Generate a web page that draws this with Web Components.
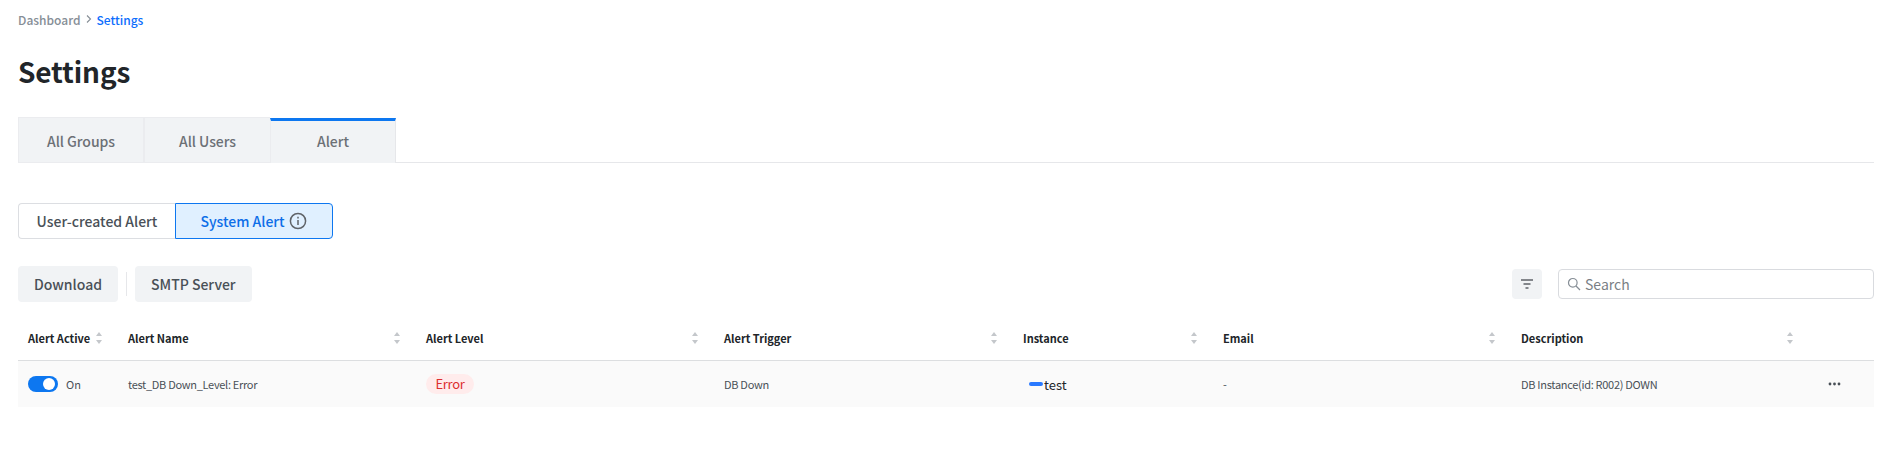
<!DOCTYPE html>
<html>
<head>
<meta charset="utf-8">
<title>Settings</title>
<style>
  html, body { margin: 0; background: #fff; }
  body { font-family: "Noto Sans CJK KR", "Noto Sans", sans-serif; }
</style>
</head>
<body>
<settings-page></settings-page>

<script>
class AppBreadcrumb extends HTMLElement {
  constructor() {
    super();
    this.attachShadow({ mode: 'open' }).innerHTML = `
      <style>
        :host { display: flex; align-items: center; height: 20px; font-size: 12px; font-weight: 500; color: #868e96; }
        svg { margin: 0 4px 0 4px; }
        .current { color: #0d6efd; }
      </style>
      <span>Dashboard</span>
      <svg width="8" height="10" viewBox="0 0 8 10" fill="none" stroke="#868e96" stroke-width="1.1"><path d="M2 1.5 5.5 5 2 8.5"/></svg>
      <span class="current">Settings</span>
    `;
  }
}

class AppTabs extends HTMLElement {
  constructor() {
    super();
    this.attachShadow({ mode: 'open' }).innerHTML = `
      <style>
        :host { display: flex; height: 45px; border-bottom: 1px solid #e6e7ea; }
        .tab {
          box-sizing: border-box; width: 127px; height: 46px; display: flex; align-items: center; justify-content: center;
          background: #f1f3f5; border: 1px solid #ebecef; border-right-width: 0; font-size: 14px; font-weight: 500; color: #6c7075;
          letter-spacing: -0.05px; padding-top: 1px;
        }
        .tab + .tab { border-left-width: 2px; }
        .first { width: 125px; }
        .tab.active { border-top: 3px solid #0d77f0; border-left-width: 1px; border-right: 1px solid #e6e7ea; border-bottom: 0; height: 45px; padding: 0 0 2px; width: 126px; margin-top: 1px; }
      </style>
      <div class="tab first">All Groups</div>
      <div class="tab">All Users</div>
      <div class="tab active">Alert</div>
    `;
  }
}

class AlertSwitch extends HTMLElement {
  constructor() {
    super();
    this.attachShadow({ mode: 'open' }).innerHTML = `
      <style>
        :host { display: inline-flex; height: 36px; font-size: 14px; font-weight: 500; }
        .seg { box-sizing: border-box; display: flex; align-items: center; justify-content: center; height: 36px; }
        .user { width: 157px; border: 1px solid #dcdee2; border-right: 0; border-radius: 4px 0 0 4px; color: #495057; }
        .system { width: 158px; gap: 4px; border: 1px solid #0d77f0; border-radius: 0 4px 4px 0; background: #e0f0ff; color: #0d6ee8; }
        .system svg { margin-right: 1px; }
      </style>
      <div class="seg user">User-created Alert</div>
      <div class="seg system">System Alert
        <svg width="18" height="18" viewBox="0 0 18 18" fill="none" stroke="#5f6368" stroke-width="1.5">
          <circle cx="9" cy="9" r="7.6"/><path d="M9 8v5M9 4.8v1.6"/>
        </svg>
      </div>
    `;
  }
}

class AppButton extends HTMLElement {
  constructor() {
    super();
    this.attachShadow({ mode: 'open' }).innerHTML = `
      <style>
        :host {
          box-sizing: border-box; display: inline-flex; align-items: center; justify-content: center; height: 36px; padding: 0 16px;
          background: #f1f3f5; border-radius: 4px; font-size: 14px; font-weight: 500; color: #495057;
        }
      </style>
      <slot></slot>
    `;
  }
}

class AlertToolbar extends HTMLElement {
  constructor() {
    super();
    this.attachShadow({ mode: 'open' }).innerHTML = `
      <style>
        :host { display: flex; align-items: center; height: 36px; }
        .sep { width: 1px; height: 24px; background: #e6e7ea; margin: 0 8px; }
        .spacer { flex: 1; }
        .filter { width: 30px; height: 30px; border-radius: 4px; background: #f1f3f5; display: flex; align-items: center; justify-content: center; margin-right: 16px; }
        .search {
          box-sizing: border-box; width: 316px; height: 30px; border: 1px solid #d9dbdf; border-radius: 4px;
          display: flex; align-items: center; gap: 4px; padding-left: 8px; font-size: 14px; color: #7a7f85;
        }
      </style>
      <app-button style="width:100px;padding:0">Download</app-button>
      <div class="sep"></div>
      <app-button>SMTP Server</app-button>
      <div class="spacer"></div>
      <div class="filter">
        <svg width="14" height="12" viewBox="0 0 14 12" fill="none" stroke="#5f6368" stroke-width="1.3"><path d="M1 2h12M3.5 6h7M5.5 10h3"/></svg>
      </div>
      <div class="search">
        <svg width="14" height="14" viewBox="0 0 14 14" fill="none" stroke="#868e96" stroke-width="1.2"><circle cx="5.8" cy="5.8" r="4.3"/><path d="M9 9l4 4"/></svg>
        <span>Search</span>
      </div>
    `;
  }
}

class SortHead extends HTMLElement {
  constructor() {
    super();
    this.attachShadow({ mode: 'open' }).innerHTML = `
      <style>
        :host { display: flex; align-items: center; justify-content: space-between; font-size: 11px; font-weight: 700; color: #212529; padding-right: 16px; }
        svg { flex: none; }
      </style>
      <span><slot></slot></span>
      <svg width="6" height="12" viewBox="0 0 6 12" fill="#c4c7cb"><path d="M3 0 6 4H0zM3 12 0 8h6z"/></svg>
    `;
  }
}

class AlertTable extends HTMLElement {
  constructor() {
    super();
    this.attachShadow({ mode: 'open' }).innerHTML = `
      <style>
        :host { display: block; font-size: 11px; }
        .row { display: grid; grid-template-columns: 100px 298px 298px 299px 200px 298px 298px 1fr; }
        .head { box-sizing: border-box; height: 42px; padding-bottom: 3px; border-bottom: 1px solid #dcdee0; align-items: center; }
        .body { height: 46px; background: #fafafa; align-items: center; color: #495057; letter-spacing: -0.3px; }
        .cell { padding-left: 10px; min-width: 0; }
        .on { display: flex; align-items: center; gap: 8px; letter-spacing: 0; }
        .toggle { width: 30px; height: 16px; border-radius: 8px; background: #0d77f0; position: relative; }
        .toggle::after { content: ""; position: absolute; right: 3px; top: 2px; width: 12px; height: 12px; border-radius: 50%; background: #fff; }
        .badge { display: inline-block; height: 20px; line-height: 19px; padding: 0 9.5px; border-radius: 10px; background: #ffecec; color: #dc2f2f; font-size: 13px; }
        .inst { display: flex; align-items: center; gap: 1px; padding-left: 16px; font-size: 13px; font-weight: 400; color: #212529; letter-spacing: 0; }
        .bar { width: 14px; height: 4px; border-radius: 2px; background: #2979ff; }
        .more { display: flex; justify-content: flex-end; padding-right: 33px; }
      </style>
      <div class="row head">
        <sort-head class="cell">Alert Active</sort-head>
        <sort-head class="cell">Alert Name</sort-head>
        <sort-head class="cell">Alert Level</sort-head>
        <sort-head class="cell">Alert Trigger</sort-head>
        <sort-head class="cell">Instance</sort-head>
        <sort-head class="cell">Email</sort-head>
        <sort-head class="cell">Description</sort-head>
        <div></div>
      </div>
      <div class="row body">
        <div class="cell on"><span class="toggle"></span><span>On</span></div>
        <div class="cell">test_DB Down_Level: Error</div>
        <div class="cell"><span class="badge">Error</span></div>
        <div class="cell">DB Down</div>
        <div class="cell inst"><span class="bar"></span>test</div>
        <div class="cell">-</div>
        <div class="cell">DB Instance(id: R002) DOWN</div>
        <div class="more">
          <svg width="13" height="4" viewBox="0 0 13 4" fill="#495057"><circle cx="2" cy="2" r="1.4"/><circle cx="6.5" cy="2" r="1.4"/><circle cx="11" cy="2" r="1.4"/></svg>
        </div>
      </div>
    `;
  }
}

class SettingsPage extends HTMLElement {
  constructor() {
    super();
    this.attachShadow({ mode: 'open' }).innerHTML = `
      <style>
        :host { display: block; padding: 9px 19px 0 18px; }
        h1 { margin: 22px 0 0; font-size: 28px; line-height: 40px; font-weight: 700; letter-spacing: -0.15px; color: #212529; height: 66px; }
        alert-switch { margin-top: 40px; }
        alert-toolbar { margin-top: 27px; }
        alert-table { margin-top: 17px; }
      </style>
      <app-breadcrumb></app-breadcrumb>
      <h1>Settings</h1>
      <app-tabs></app-tabs>
      <alert-switch></alert-switch>
      <alert-toolbar></alert-toolbar>
      <alert-table></alert-table>
    `;
  }
}

customElements.define('app-breadcrumb', AppBreadcrumb);
customElements.define('app-tabs', AppTabs);
customElements.define('alert-switch', AlertSwitch);
customElements.define('app-button', AppButton);
customElements.define('alert-toolbar', AlertToolbar);
customElements.define('sort-head', SortHead);
customElements.define('alert-table', AlertTable);
customElements.define('settings-page', SettingsPage);
</script>
</body>
</html>
